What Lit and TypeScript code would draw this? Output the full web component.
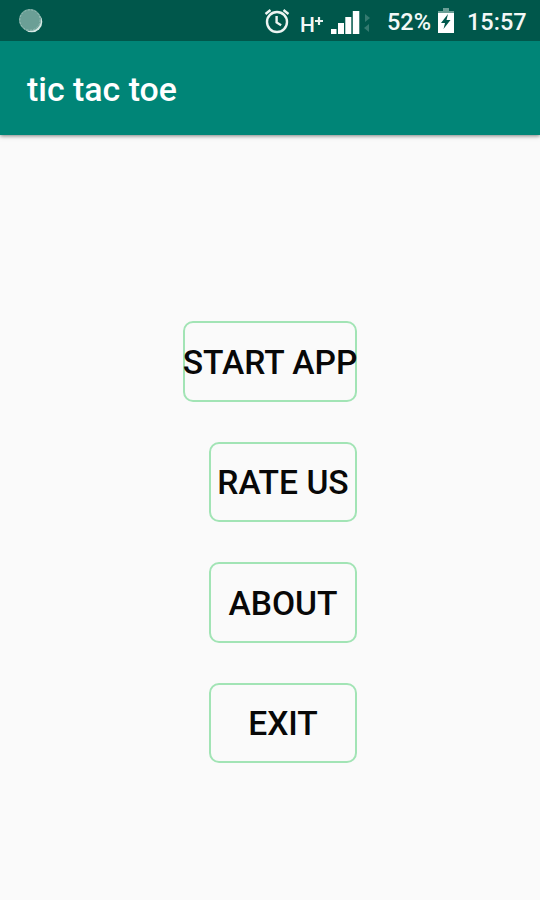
import { LitElement, html, css } from "lit";
import { customElement } from "lit/decorators.js";

@customElement("app-root")
export class AppRoot extends LitElement {
  static styles = css`
    :host { display: flex; flex-direction: column; width: 540px; height: 900px; background: #fafafa; font-family: Roboto, sans-serif; overflow: hidden; }
    svg { display: block; flex: none; }
    .status { position: relative; z-index: 1; height: 41px; flex: none; box-sizing: border-box; background: #00574b; color: #f3f8f7; display: flex; align-items: flex-start; padding: 0 0 0 18px; font-size: 23.5px; line-height: 42px; font-weight: 500; white-space: nowrap; }
    .dot { margin-top: 8px; }
    .alarm { margin: 8px 0 0 220px; }
    .net { width: 15px; margin: 4px 0 0 10px; font-size: 21px; line-height: 43px; }
    .plus { margin-top: 17px; }
    .signal { margin: 10px 0 0 8px; }
    .pct { width: 44px; margin: 1px 0 0 15px; }
    .bat { margin: 8px 13px 0 7px; }
    .time { margin-top: 1px; }
    .bar { height: 94px; flex: none; background: #008577; color: #fff; display: flex; align-items: center; padding: 3px 27px 0; box-sizing: border-box; font-size: 33.9px; font-weight: 500; box-shadow: 0 1px 4px rgba(0,0,0,.5); }
    .menu { display: flex; flex-direction: column; align-items: flex-end; gap: 40px; width: 357px; padding-top: 186px; }
    button { display: flex; align-items: center; justify-content: center; font: 500 33.6px Roboto, sans-serif; color: #080808; width: 148px; height: 80.5px; box-sizing: border-box; border: 2px solid #a2e4b5; border-radius: 10px; background: none; padding: 2px 0 0; white-space: nowrap; }
    .wide { width: 174px; }
    .wide span { margin: 0 -4px; }
  `;
  render() {
    return html`
      <div class="status">
        <svg class="dot" width="26" height="26" viewBox="0 0 26 26"><circle cx="13.8" cy="13.8" r="10.5" fill="#d5e8e4"/><circle cx="12" cy="12" r="11" fill="#6b9f96"/><circle cx="12" cy="12" r="10.2" fill="none" stroke="#9bc0b9" stroke-dasharray="2 1.5"/></svg>
        <svg class="alarm" width="26" height="26" viewBox="0 0 26 26" fill="none" stroke="#edf4f2" stroke-width="2.4"><circle cx="13" cy="14" r="10"/><path d="M12.6 8v6.4l4.5 2.8M1.5 6l5-4M24.5 6l-5-4"/></svg>
        <span class="net">H</span>
        <svg class="plus" width="8" height="8" viewBox="0 0 8 8"><path d="M4 0v8M0 4h8" stroke="#e9f2f0" stroke-width="2.2"/></svg>
        <svg class="signal" width="41" height="26" viewBox="0 0 41 26"><path fill="#fff" d="M0 19h5.5v5H0zM7 13h6v11H7zM14.3 7h6v17h-6zM21.8 1h6.5v23h-6.5z"/><path fill="#347a70" d="M34 4l5 4-5 4zM38 14v8l-5-4z"/></svg>
        <span class="pct">52%</span>
        <svg class="bat" width="16" height="26" viewBox="0 0 16 26"><path fill="#6b9f96" d="M5 0h6v3h5v3H0V3h5z"/><path fill="#fff" d="M0 5h16v20H0z"/><path d="M10 6L3 15h4l-1.5 6 7-9H8.5z" fill="#00574b"/></svg>
        <span class="time">15:57</span>
      </div>
      <div class="bar">tic tac toe</div>
      <div class="menu"><button class="wide"><span>START APP</span></button><button>RATE US</button><button>ABOUT</button><button>EXIT</button></div>
    `;
  }
}
